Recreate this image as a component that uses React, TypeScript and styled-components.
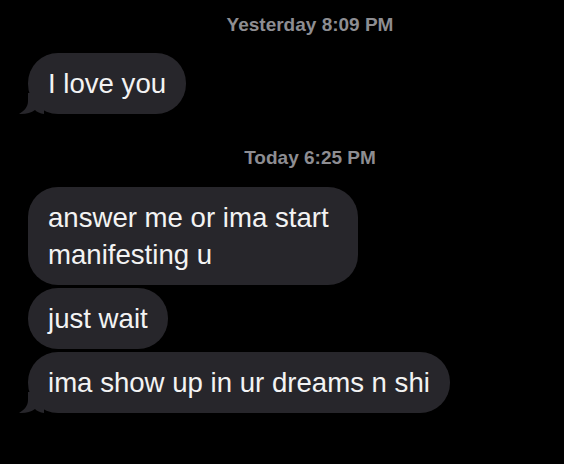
import React from "react";
import styled, { createGlobalStyle } from "styled-components";

const Global = createGlobalStyle`
  html, body { margin: 0; padding: 0; background: #000; }
  body { width: 564px; height: 464px; overflow: hidden; }
`;

const Thread = styled.div`
  width: 564px;
  height: 464px;
  background: #000;
  display: flex;
  flex-direction: column;
  padding: 13px 0 0 28px;
  box-sizing: border-box;
  font-family: "Liberation Sans", Arial, sans-serif;
`;

const Stamp = styled.div<{ $top: number; $bottom: number }>`
  display: flex;
  justify-content: center;
  padding-left: 28px;
  margin-top: ${(p) => p.$top}px;
  margin-bottom: ${(p) => p.$bottom}px;
  font-size: 19px;
  line-height: 24px;
  font-weight: 600;
  color: #8d8d92;
`;

const Group = styled.div`
  display: flex;
  flex-direction: column;
  align-items: flex-start;
  gap: 3px;
`;

const Bubble = styled.div<{ $max: number }>`
  position: relative;
  background: #27262b;
  color: #f3f3f3;
  font-size: 27.6px;
  line-height: 37px;
  padding: 12px 20px 12px 20px;
  border-radius: 30px;
  max-width: ${(p) => p.$max}px;
  box-sizing: content-box;
`;

const Tail = styled.svg`
  position: absolute;
  left: -10px;
  bottom: -1px;
  width: 26px;
  height: 22px;
`;

function Msg({
  children,
  tail,
  max = 400,
}: {
  children: React.ReactNode;
  tail?: boolean;
  max?: number;
}) {
  return (
    <Bubble $max={max}>
      {children}
      {tail && (
        <Tail viewBox="0 0 26 22">
          <path
            d="M10 0 L10 8 C10 14 6 18 1 21 C7 21.5 13 20 17 17 C19 19 22 20.5 26 21 L26 0 Z"
            fill="#27262b"
          />
        </Tail>
      )}
    </Bubble>
  );
}

export default function App() {
  return (
    <>
      <Global />
      <Thread>
        <Stamp $top={0} $bottom={16}>Yesterday 8:09 PM</Stamp>
        <Group>
          <Msg tail>I love you</Msg>
        </Group>
        <Stamp $top={32} $bottom={17}>Today 6:25 PM</Stamp>
        <Group>
          <Msg max={290}>answer me or ima start manifesting u</Msg>
          <Msg>just wait</Msg>
          <Msg tail>ima show up in ur dreams n shi</Msg>
        </Group>
      </Thread>
    </>
  );
}
